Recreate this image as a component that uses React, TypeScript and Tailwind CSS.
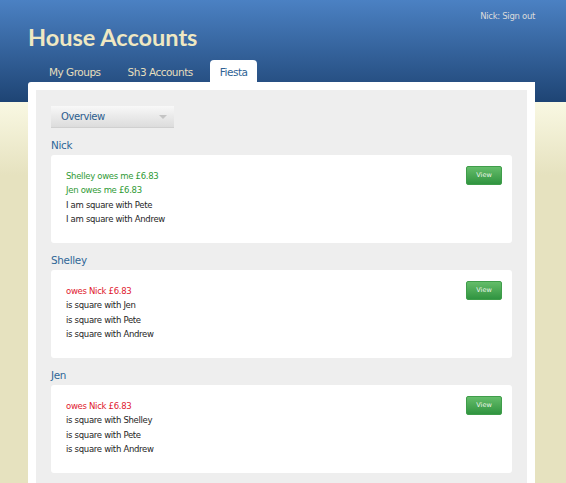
import React from "react";

type Person = {
  name: string;
  lines: { text: string; tone?: "green" | "red" }[];
};

const people: Person[] = [
  {
    name: "Nick",
    lines: [
      { text: "Shelley owes me £6.83", tone: "green" },
      { text: "Jen owes me £6.83", tone: "green" },
      { text: "I am square with Pete" },
      { text: "I am square with Andrew" },
    ],
  },
  {
    name: "Shelley",
    lines: [
      { text: "owes Nick £6.83", tone: "red" },
      { text: "is square with Jen" },
      { text: "is square with Pete" },
      { text: "is square with Andrew" },
    ],
  },
  {
    name: "Jen",
    lines: [
      { text: "owes Nick £6.83", tone: "red" },
      { text: "is square with Shelley" },
      { text: "is square with Pete" },
      { text: "is square with Andrew" },
    ],
  },
];

const tabs = ["My Groups", "Sh3 Accounts", "Fiesta"];

function PersonCard({ person }: { person: Person }) {
  return (
    <div>
      <h2 className="mt-[9px] mb-[2px] h-[16px] text-[10.4px] leading-[16px] tracking-[-0.3px] text-[#2f6697]">
        {person.name}
      </h2>
      <div className="flex h-[88px] items-start justify-between rounded-[3px] bg-white pt-[11px] pr-[10px] pl-[15px]">
        <ul className="mt-[3px] text-[8.5px] leading-[14.4px] tracking-[-0.3px] text-[#1e1e1e]">
          {person.lines.map((l, i) => (
            <li
              key={i}
              className={
                l.tone === "green" ? "text-[#2f9a35]" : l.tone === "red" ? "text-[#e0202e]" : ""
              }
            >
              {l.text}
            </li>
          ))}
        </ul>
        <button className="h-[19px] w-[36px] rounded-[2px] border border-[#3f9d4a] bg-gradient-to-b from-[#64bd6a] to-[#2f9440] text-[6.5px] leading-[17px] text-[#eef8ee]">
          View
        </button>
      </div>
    </div>
  );
}

export default function App() {
  return (
    <div className="min-h-[483px] bg-[linear-gradient(to_bottom,#4b81c3_0px,#1e4474_102px,#f9f8e3_102px,#e6e2bf_175px,#e6e2bf_100%)] font-['DejaVu_Sans',sans-serif]">
      <header className="h-[102px] px-[28px]">
        <div className="flex h-[23px] items-end justify-end pr-[3px] text-[8.5px] leading-[14px] tracking-[-0.3px] text-[#dcdcdc]">
          Nick: Sign out
        </div>
        <h1 className="-mt-[1px] font-['Lato',sans-serif] text-[23.5px] leading-[30px] font-bold text-[#efe8c2]">
          House Accounts
        </h1>
        <nav className="mt-[8px] ml-[11px] flex gap-[7px]">
          {tabs.map((t) => (
            <div
              key={t}
              className={
                t === "Fiesta"
                  ? "h-[22px] rounded-t-[4px] bg-white px-[10px] text-[10.5px] leading-[24px] tracking-[-0.5px] text-[#2e6294]"
                  : "h-[22px] px-[10px] text-[10.5px] leading-[24px] tracking-[-0.5px] text-[#e6dfbd]"
              }
            >
              {t}
            </div>
          ))}
        </nav>
      </header>

      <main className="-mt-[20px] ml-[28px] w-[507px] rounded-tl-[3px] bg-white px-[8px] pt-[8px]">
        <div className="bg-[#eeeeee] px-[15px] pt-[16px] pb-[16px]">
          <div className="relative flex h-[22px] w-[123px] items-center border-b border-[#d0d0d0] bg-gradient-to-b from-[#f8f8f8] to-[#dcdcdc] pl-[10px] text-[10px] tracking-[-0.4px] text-[#2c5d8e]">
            Overview
            <span className="absolute top-[9px] right-[7px] h-0 w-0 border-x-[4px] border-t-[4px] border-x-transparent border-t-[#c4c4c4]" />
          </div>
          {people.map((p) => (
            <PersonCard key={p.name} person={p} />
          ))}
        </div>
      </main>
    </div>
  );
}
